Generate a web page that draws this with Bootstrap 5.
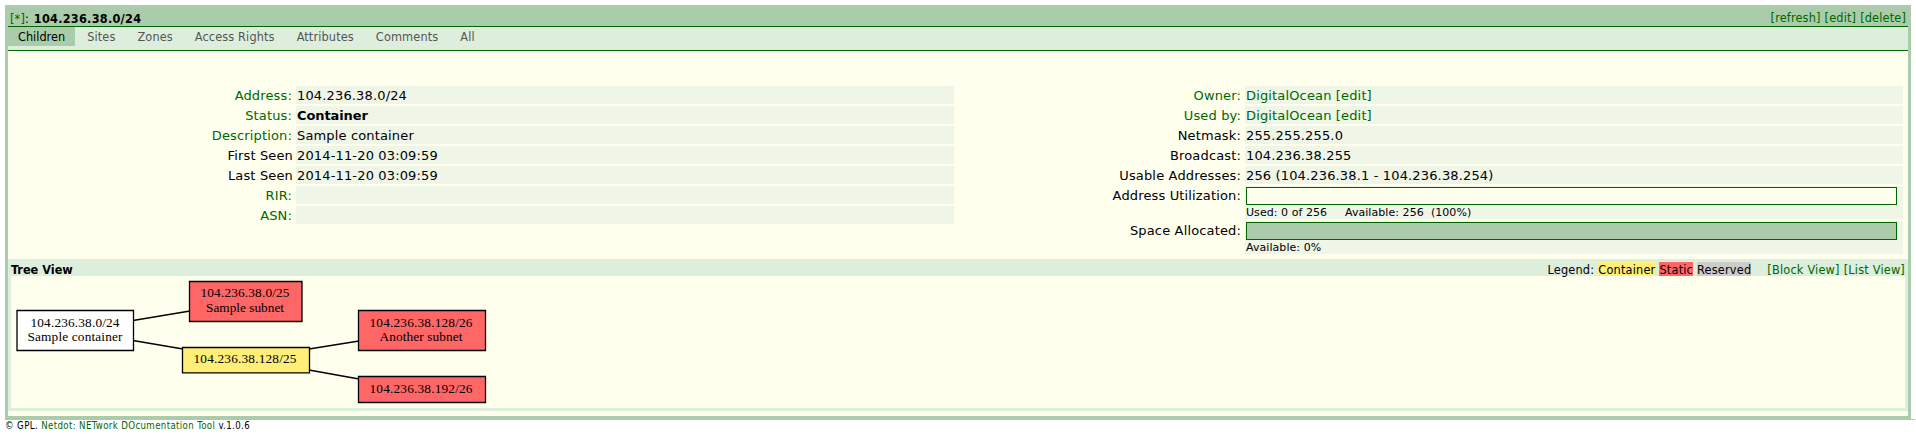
<!DOCTYPE html>
<html lang="en">
<head>
<meta charset="utf-8">
<title>104.236.38.0/24</title>
<link href="https://cdn.jsdelivr.net/npm/bootstrap@5.3.0/dist/css/bootstrap.min.css" rel="stylesheet">
<style>
body{background:#fff;color:#000;font:12.6px/16px "DejaVu Sans Condensed","DejaVu Sans",sans-serif;overflow:hidden}
a{color:#060;text-decoration:none}
.frame{margin:5px 5px 0;border:3px solid #aca;background:#ffe;height:414px}
.titlebar{background:#aca;height:19px;border-bottom:1px solid #060;letter-spacing:.16px}
.page-title{padding:3px 0 0 2px}
.page-title b{letter-spacing:.25px;margin-left:1px}
.page-actions{padding:2px 2px 0 0}
.tabs{background:#ded;height:24px;border-bottom:1px solid #060;letter-spacing:.13px}
.tabs .nav-link{padding:1px 10px 0;height:19px;line-height:18px;color:#555;margin-right:2px}
.tabs .nav-link.active{background:#aca;color:#000;letter-spacing:0}
.details{padding:35px 5px 0 0;height:208px;font:13px/18px "DejaVu Sans",sans-serif;letter-spacing:.15px}
.fields{display:grid;grid-template-columns:286px 658px;column-gap:2px;row-gap:2px;align-content:start}
.fields dt,.fields dd{margin:0;height:18px;line-height:20px;font-weight:400;padding:0 1px}
.fields dd b{letter-spacing:-.1px}
.fields dt{text-align:right;white-space:nowrap}
.fields dt.colon{padding-right:2px}
.fields dd{background:#eff5e7}
.green{color:#060}
.fields dd.meter{height:33px;padding-top:1px}
.gauge{width:651px;height:18px;border:1px solid #060;background:#ffe}
.gauge.full{background:#aca}
.note{font-size:11px;line-height:16px;height:14px;letter-spacing:.06px;white-space:pre}
.treehead{background:#ded;height:17px;padding:3px 3px 0;line-height:14px;letter-spacing:.2px}
.treehead b{letter-spacing:0;line-height:16px}
.treehead > div{line-height:16px}
.treebody{border:3px solid #ded;border-top:0;height:135px}
.treebody svg{display:block}
.foot{border-top:1px solid #aca;margin:0 1px 0 5px;font-size:9.6px;line-height:12px;letter-spacing:.37px}
.legend-key{height:14px;line-height:16px}
.legend-container{background:#fe7}
.legend-static{background:#f66}
.legend-reserved{background:#ccc}
</style>
</head>
<body>
<main class="frame">
  <header class="titlebar d-flex justify-content-between">
    <div class="page-title"><a href="#">[*]</a>: <b>104.236.38.0/24</b></div>
    <div class="page-actions d-flex gap-1"><a href="#">[refresh]</a><a href="#">[edit]</a><a href="#">[delete]</a></div>
  </header>
  <nav class="tabs nav flex-nowrap">
    <a class="nav-link active" href="#">Children</a><a class="nav-link" href="#">Sites</a><a class="nav-link" href="#">Zones</a><a class="nav-link" href="#">Access Rights</a><a class="nav-link" href="#">Attributes</a><a class="nav-link" href="#">Comments</a><a class="nav-link" href="#">All</a>
  </nav>
  <section class="details d-flex justify-content-between">
    <dl class="fields m-0">
      <dt class="green colon">Address:</dt><dd>104.236.38.0/24</dd>
      <dt class="green colon">Status:</dt><dd><b>Container</b></dd>
      <dt class="green colon">Description:</dt><dd>Sample container</dd>
      <dt>First Seen</dt><dd>2014-11-20 03:09:59</dd>
      <dt>Last Seen</dt><dd>2014-11-20 03:09:59</dd>
      <dt class="green colon">RIR:</dt><dd></dd>
      <dt class="green colon">ASN:</dt><dd></dd>
    </dl>
    <dl class="fields m-0">
      <dt class="green colon">Owner:</dt><dd><a href="#">DigitalOcean</a> <a href="#">[edit]</a></dd>
      <dt class="green colon">Used by:</dt><dd><a href="#">DigitalOcean</a> <a href="#">[edit]</a></dd>
      <dt class="colon">Netmask:</dt><dd>255.255.255.0</dd>
      <dt class="colon">Broadcast:</dt><dd>104.236.38.255</dd>
      <dt class="colon">Usable Addresses:</dt><dd>256 (104.236.38.1 - 104.236.38.254)</dd>
      <dt class="colon">Address Utilization:</dt><dd class="meter"><div class="gauge"></div><div class="note">Used: 0 of 256 &nbsp; &nbsp; Available: 256 &nbsp;(100%)</div></dd>
      <dt class="colon">Space Allocated:</dt><dd class="meter"><div class="gauge full"></div><div class="note">Available: 0%</div></dd>
    </dl>
  </section>
  <section>
    <div class="treehead d-flex justify-content-between">
      <b>Tree View</b>
      <div class="d-flex gap-1"><span>Legend:</span><span class="legend-key legend-container">Container</span><span class="legend-key legend-static">Static</span><span class="legend-key legend-reserved">Reserved</span><a class="ms-2 ps-1" href="#">[Block View]</a><a href="#">[List View]</a></div>
    </div>
    <div class="treebody">
      <svg width="500" height="132" viewBox="11 276 500 132" font-family="'Liberation Serif',serif" font-size="13.3" text-anchor="middle">
        <g stroke="#000" stroke-width="1.3">
          <path d="M133 320.5L190 311M133 340.5L183 349M309 349L359 341M309 370L359 379" fill="none"/>
          <path fill="#fff" d="M17 310.5h116.5v40H17z"/>
          <path fill="#f66" d="M189.5 281.5H302v40H189.5zM358.500 310.500h127v40h-127zM358.500 376.500h127v26h-127z"/>
          <path fill="#fe7" d="M182.500 347.500h127v25.300h-127z"/>
        </g>
        <text x="75" y="327" textLength="89">104.236.38.0/24</text>
        <text x="75" y="341" textLength="95">Sample container</text>
        <text x="245" y="297" textLength="89">104.236.38.0/25</text>
        <text x="245" y="312" textLength="78">Sample subnet</text>
        <text x="245" y="363" textLength="103">104.236.38.128/25</text>
        <text x="421" y="327" textLength="103">104.236.38.128/26</text>
        <text x="421" y="341" textLength="83">Another subnet</text>
        <text x="421" y="393" textLength="103">104.236.38.192/26</text>
      </svg>
    </div>
  </section>
</main>
<footer class="foot">© GPL. <a href="#">Netdot: NETwork DOcumentation Tool</a> v.1.0.6</footer>
<script src="https://cdn.jsdelivr.net/npm/bootstrap@5.3.0/dist/js/bootstrap.bundle.min.js"></script>
</body>
</html>
